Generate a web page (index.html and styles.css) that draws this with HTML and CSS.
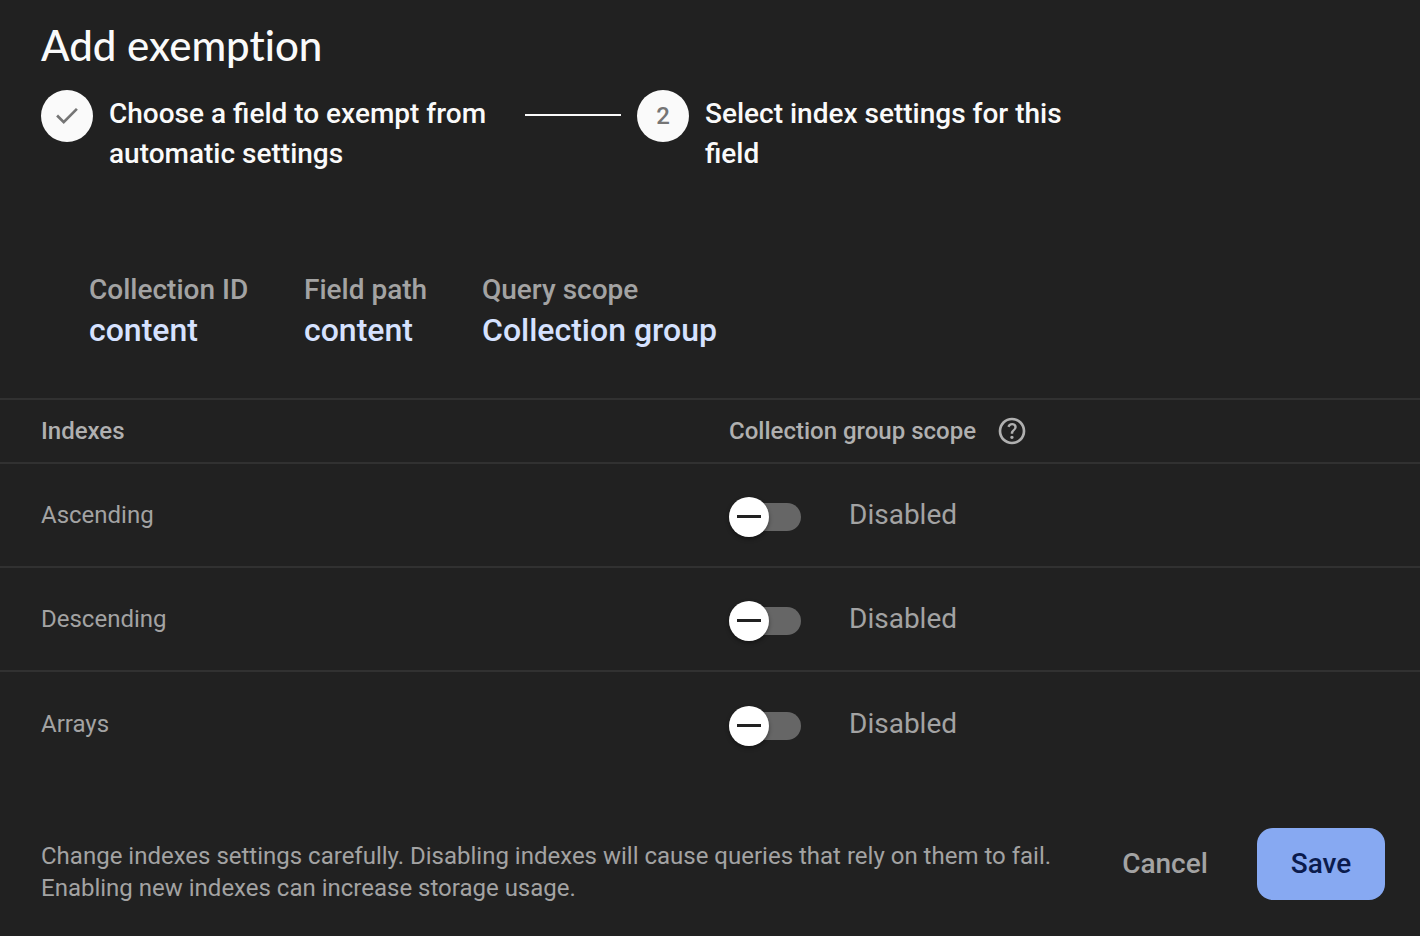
FILE: index.html
```html
<!DOCTYPE html>
<html lang="en">
<head>
<meta charset="utf-8">
<meta name="viewport" content="width=device-width, initial-scale=1">
<title>Add exemption</title>
<link rel="stylesheet" href="styles.css">
</head>
<body>
<main class="dialog">
  <header class="header">
    <h1 class="title">Add exemption</h1>
    <ol class="steps">
      <li class="step">
        <span class="step-badge">
          <svg class="icon" viewBox="0 -960 960 960" aria-hidden="true"><path d="M382-240 154-468l57-57 171 171 367-367 57 57-424 424Z"/></svg>
        </span>
        <span class="step-label">Choose a field to exempt from automatic settings</span>
      </li>
      <li class="step-line" aria-hidden="true"></li>
      <li class="step" aria-current="step">
        <span class="step-badge">2</span>
        <span class="step-label">Select index settings for this field</span>
      </li>
    </ol>
  </header>

  <dl class="summary">
    <div class="summary-item"><dt>Collection ID</dt><dd>content</dd></div>
    <div class="summary-item"><dt>Field path</dt><dd>content</dd></div>
    <div class="summary-item"><dt>Query scope</dt><dd>Collection group</dd></div>
  </dl>

  <table class="indexes">
    <thead>
      <tr>
        <th class="col-name" scope="col">Indexes</th>
        <th scope="col">
          <div class="scope-head">
            <span>Collection group scope</span>
            <button class="help" type="button" aria-label="Help">
              <svg class="icon" viewBox="0 -960 960 960" aria-hidden="true"><path d="M478-240q21 0 35.500-14.500T528-290q0-21-14.500-35.500T478-340q-21 0-35.500 14.500T428-290q0 21 14.500 35.500T478-240Zm-36-154h74q0-33 7.500-52t42.500-52q26-26 41-49.500t15-56.500q0-56-41-86t-97-30q-57 0-92.500 30T342-618l66 26q5-18 22.500-39t53.500-21q32 0 48 17.500t16 38.500q0 20-12 37.500T506-526q-44 39-54 59t-10 73Zm38 314q-83 0-156-31.500T197-197q-54-54-85.500-127T80-480q0-83 31.500-156T197-763q54-54 127-85.500T480-880q83 0 156 31.500T763-763q54 54 85.500 127T880-480q0 83-31.500 156T763-197q-54 54-127 85.500T480-80Zm0-80q134 0 227-93t93-227q0-134-93-227t-227-93q-134 0-227 93t-93 227q0 134 93 227t227 93Z"/></svg>
            </button>
          </div>
        </th>
      </tr>
    </thead>
    <tbody>
      <tr>
        <th scope="row">Ascending</th>
        <td><div class="setting"><input class="switch" type="checkbox" role="switch" id="asc"><label for="asc">Disabled</label></div></td>
      </tr>
      <tr>
        <th scope="row">Descending</th>
        <td><div class="setting"><input class="switch" type="checkbox" role="switch" id="desc"><label for="desc">Disabled</label></div></td>
      </tr>
      <tr>
        <th scope="row">Arrays</th>
        <td><div class="setting"><input class="switch" type="checkbox" role="switch" id="arr"><label for="arr">Disabled</label></div></td>
      </tr>
    </tbody>
  </table>

  <footer class="footer">
    <p class="note">Change indexes settings carefully. Disabling indexes will cause queries that rely on them to fail. Enabling new indexes can increase storage usage.</p>
    <div class="actions">
      <button class="button button-cancel" type="button">Cancel</button>
      <button class="button button-save" type="button">Save</button>
    </div>
  </footer>
</main>
</body>
</html>
```
FILE: styles.css
```css
* {
  box-sizing: border-box;
}

body {
  margin: 0;
  background: #212121;
  color: #a3a3a3;
  font-family: Roboto, "Liberation Sans", sans-serif;
  font-size: 24px;
  line-height: 32px;
}

button {
  border: 0;
  padding: 0;
  background: none;
  color: inherit;
  font: inherit;
  cursor: pointer;
}

.icon {
  display: block;
  width: 32px;
  height: 32px;
  fill: currentColor;
}

.header {
  padding: 20px 41px 0;
  color: #fafafa;
}

.title {
  margin: 0 0 20px;
  font-family: Lato, Roboto, sans-serif;
  font-size: 42px;
  font-variant-ligatures: none;
  font-weight: 500;
  line-height: 50px;
}

.steps {
  display: flex;
  align-items: flex-start;
  gap: 16px;
  margin: 0;
  padding: 0;
  list-style: none;
}

.step {
  display: flex;
  gap: 16px;
}

.step-badge {
  display: flex;
  flex: none;
  align-items: center;
  justify-content: center;
  width: 52px;
  height: 52px;
  border-radius: 50%;
  background: #fafafa;
  color: #757575;
  font-weight: 500;
}

.step-label {
  width: 400px;
  padding-top: 4px;
  font-size: 28px;
  font-weight: 500;
  line-height: 40px;
}

.step-line {
  width: 96px;
  height: 2px;
  margin-top: 24px;
  background: #fafafa;
}

.summary {
  display: grid;
  grid-template-columns: 167px 130px auto;
  justify-content: start;
  gap: 48px;
  margin: 0;
  padding: 96px 41px 48px 89px;
  font-weight: 500;
}

.summary dt {
  font-size: 28px;
  line-height: 40px;
}

.summary dd {
  margin: 0;
  color: #d6e2ff;
  font-size: 32px;
  line-height: 40px;
}

.indexes {
  width: 100%;
  border-spacing: 0;
  border-top: 2px solid #313131;
  table-layout: fixed;
  text-align: left;
}

.col-name {
  width: 51.34%;
}

.indexes th,
.indexes td {
  height: 104px;
  padding: 0;
  border-bottom: 2px solid #313131;
  font-weight: 400;
}

.indexes thead th {
  height: 64px;
  color: #b0b0b0;
  font-weight: 500;
}

.indexes th:first-child {
  padding-left: 41px;
}

.indexes tbody tr:last-child > * {
  border-bottom: 0;
}

.scope-head {
  display: flex;
  align-items: center;
  gap: 20px;
}

.setting {
  display: flex;
  align-items: center;
  gap: 48px;
  font-size: 28px;
}

.switch {
  display: flex;
  align-items: center;
  width: 72px;
  height: 28px;
  margin: 4px 0 0;
  border-radius: 14px;
  background: #666;
  appearance: none;
  cursor: pointer;
}

.switch::before {
  flex: none;
  width: 40px;
  height: 40px;
  border-radius: 50%;
  background: linear-gradient(#212121, #212121) 8px 18px / 24px 3px no-repeat #fff;
  box-shadow: 0 2px 4px rgba(0, 0, 0, 0.4);
  content: "";
}

.switch:checked::before {
  margin-left: auto;
}

.footer {
  display: flex;
  align-items: center;
  justify-content: space-between;
  gap: 32px;
  padding: 48px 35px 36px 41px;
}

.note {
  max-width: 1020px;
  margin: 16px 0 0;
}

.actions {
  display: flex;
  flex: none;
  gap: 16px;
}

.button {
  min-width: 128px;
  height: 72px;
  padding: 0 32px;
  border-radius: 16px;
  font-size: 28px;
  font-weight: 500;
}

.button-cancel {
  min-width: 152px;
}

.button-save {
  background: #87a9f2;
  color: #0b1b4d;
}
```
